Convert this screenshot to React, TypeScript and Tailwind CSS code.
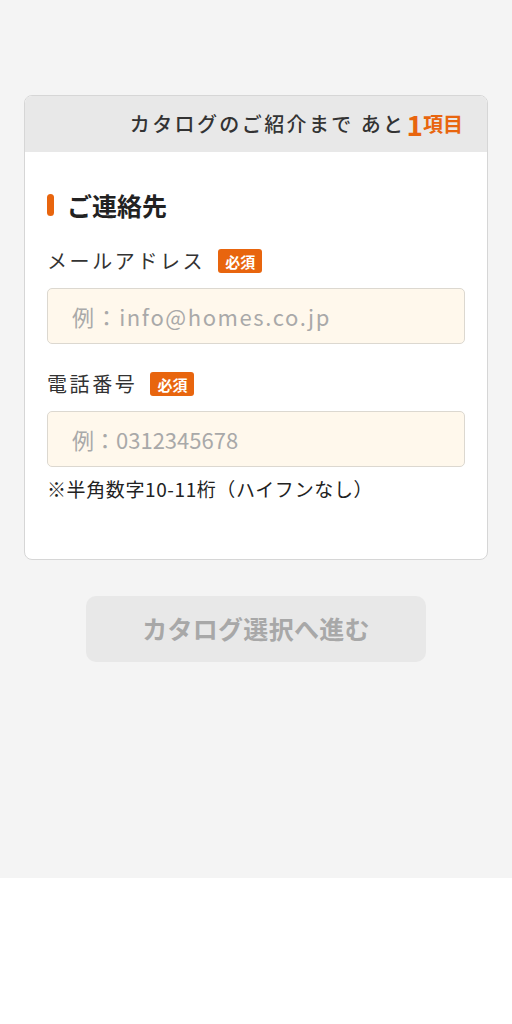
const font = "font-['Noto_Sans_CJK_JP',sans-serif]";

function Required() {
  return (
    <span className="ml-[13px] inline-flex h-6 w-11 items-center justify-center rounded-[3px] bg-[#e8650e] text-[15px] font-bold leading-none text-white">
      必須
    </span>
  );
}

function Field({ label, placeholder, track }: { label: string; placeholder: string; track: string }) {
  return (
    <div className="mt-[26px]">
      <div className="flex h-7 items-center">
        <span className="text-[20px] leading-7 tracking-[2.6px] text-[#333]">{label}</span>
        <Required />
      </div>
      <input
        className={`mt-[13px] block h-14 w-full rounded-[5px] border border-[#dcd8d0] bg-[#fff8ec] px-6 text-[22px] text-[#333] outline-none placeholder:text-[#a9a9a9] ${track}`}
        placeholder={placeholder}
      />
    </div>
  );
}

export default function App() {
  return (
    <div className={`${font} min-h-[1024px] bg-white`}>
      <div className="h-[878px] bg-[#f4f4f4] px-6 pt-[95px]">
        <div className="overflow-hidden rounded-[8px] border border-[#d6d6d6] bg-white">
          <div className="flex h-14 items-center justify-end bg-[#e8e8e8] pr-6">
            <span className="text-[20px] font-medium tracking-[2.4px] text-[#333]">カタログのご紹介まで あと</span>
            <span className="ml-[1px] text-[28px] font-bold leading-none text-[#e8650e]">1</span>
            <span className="text-[20px] font-bold text-[#e8650e]">項目</span>
          </div>
          <div className="px-[22px] pb-[57px] pt-[37px]">
            <div className="flex h-8 items-center">
              <span className="h-[22px] w-[7px] rounded-full bg-[#e8650e]" />
              <span className="ml-[13px] text-[25px] font-bold leading-8 text-[#222]">ご連絡先</span>
            </div>
            <Field label="メールアドレス" placeholder="例：info@homes.co.jp" track="tracking-[1.6px]" />
            <Field label="電話番号" placeholder="例：0312345678" track="tracking-[0px]" />
            <p className="mt-[9px] text-[19px] leading-[26px] tracking-[0.6px] text-[#222]">※半角数字10-11桁（ハイフンなし）</p>
          </div>
        </div>
        <div className="mt-9 flex justify-center">
          <button className="h-[66px] w-[340px] rounded-[10px] bg-[#e8e8e8] text-[25px] font-bold tracking-[0.3px] text-[#a8a8a8]">
            カタログ選択へ進む
          </button>
        </div>
      </div>
    </div>
  );
}
